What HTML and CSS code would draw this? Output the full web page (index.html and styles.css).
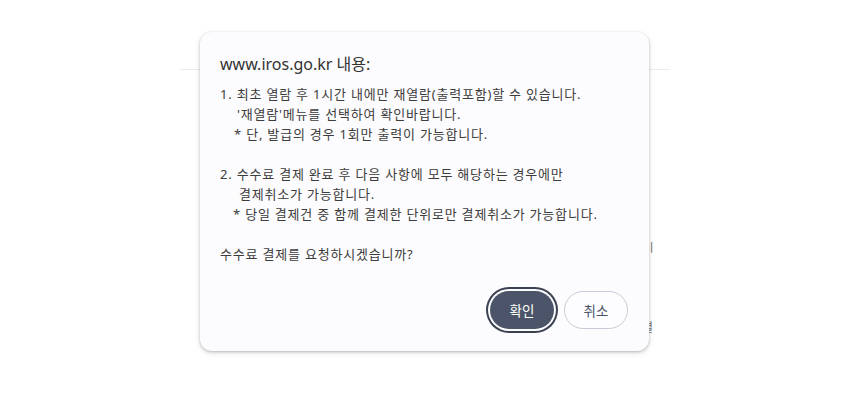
FILE: index.html
```html
<!DOCTYPE html>
<html lang="ko">
<head>
<meta charset="utf-8">
<title>iros</title>
<link rel="stylesheet" href="styles.css">
</head>
<body>
<div class="page">
  <div class="rule"></div>
  <div class="peek peek-a">ㅣ</div>
  <div class="peek peek-b">결</div>
</div>
<div class="dialog" role="dialog">
  <div class="title">www.iros.go.kr 내용:</div>
  <div class="message">
    <div class="line">1. 최초 열람 후 1시간 내에만 재열람(출력포함)할 수 있습니다.</div>
    <div class="line ind1">'재열람'메뉴를 선택하여 확인바랍니다.</div>
    <div class="line ind2">* 단, 발급의 경우 1회만 출력이 가능합니다.</div>
    <div class="line blank"></div>
    <div class="line">2. 수수료 결제 완료 후 다음 사항에 모두 해당하는 경우에만</div>
    <div class="line ind3">결제취소가 가능합니다.</div>
    <div class="line ind4">* 당일 결제건 중 함께 결제한 단위로만 결제취소가 가능합니다.</div>
    <div class="line blank"></div>
    <div class="line">수수료 결제를 요청하시겠습니까?</div>
  </div>
  <div class="actions">
    <button class="btn btn-ok">확인</button>
    <button class="btn btn-cancel">취소</button>
  </div>
</div>
</body>
</html>
```
FILE: styles.css
```css
html, body {
  margin: 0;
  padding: 0;
  background: #ffffff;
  width: 850px;
  height: 395px;
  overflow: hidden;
  font-family: "Noto Sans", "Noto Sans CJK KR", sans-serif;
}
.page {
  position: relative;
  width: 850px;
  height: 395px;
}
.rule {
  position: absolute;
  left: 180px;
  top: 69px;
  width: 490px;
  height: 1px;
  background: #ececec;
}
.peek {
  position: absolute;
  font-size: 12px;
  color: #777;
  font-family: "Noto Sans CJK KR", sans-serif;
}
.peek-a { left: 646px; top: 238px; }
.peek-b { left: 642px; top: 318px; }
.dialog {
  position: absolute;
  left: 200px;
  top: 32px;
  width: 449px;
  box-sizing: border-box;
  padding: 21px 21px 22px 20px;
  background: #fcfbfd;
  border-radius: 12px;
  box-shadow: 0 1px 3px rgba(0,0,0,0.22), 0 2px 6px rgba(0,0,0,0.10);
  color: #3a3a3a;
}
.title {
  font-size: 16px;
  line-height: 22px;
  color: #333;
  margin-bottom: 9px;
}
.message {
  font-size: 13px;
  line-height: 20px;
  color: #3c3c3c;
  letter-spacing: 0.8px;
}
.line { height: 20px; white-space: nowrap; }
.ind1 { padding-left: 17px; }
.ind2 { padding-left: 14px; }
.ind3 { padding-left: 19px; }
.ind4 { padding-left: 13px; }
.actions {
  display: flex;
  justify-content: flex-end;
  gap: 8px;
  margin-top: 27px;
}
.btn {
  width: 64px;
  height: 38px;
  border-radius: 19px;
  font-family: "Noto Sans CJK KR", sans-serif;
  font-size: 13.5px;
  padding: 0;
  cursor: pointer;
}
.btn-ok {
  background: #4b5468;
  color: #ffffff;
  border: none;
  box-shadow: 0 0 0 2px #fcfbfd, 0 0 0 4px #3a4150;
  margin-right: 2px;
}
.btn-cancel {
  background: #fdfcff;
  color: #4b5468;
  border: 1px solid #c9cbd8;
}
```
